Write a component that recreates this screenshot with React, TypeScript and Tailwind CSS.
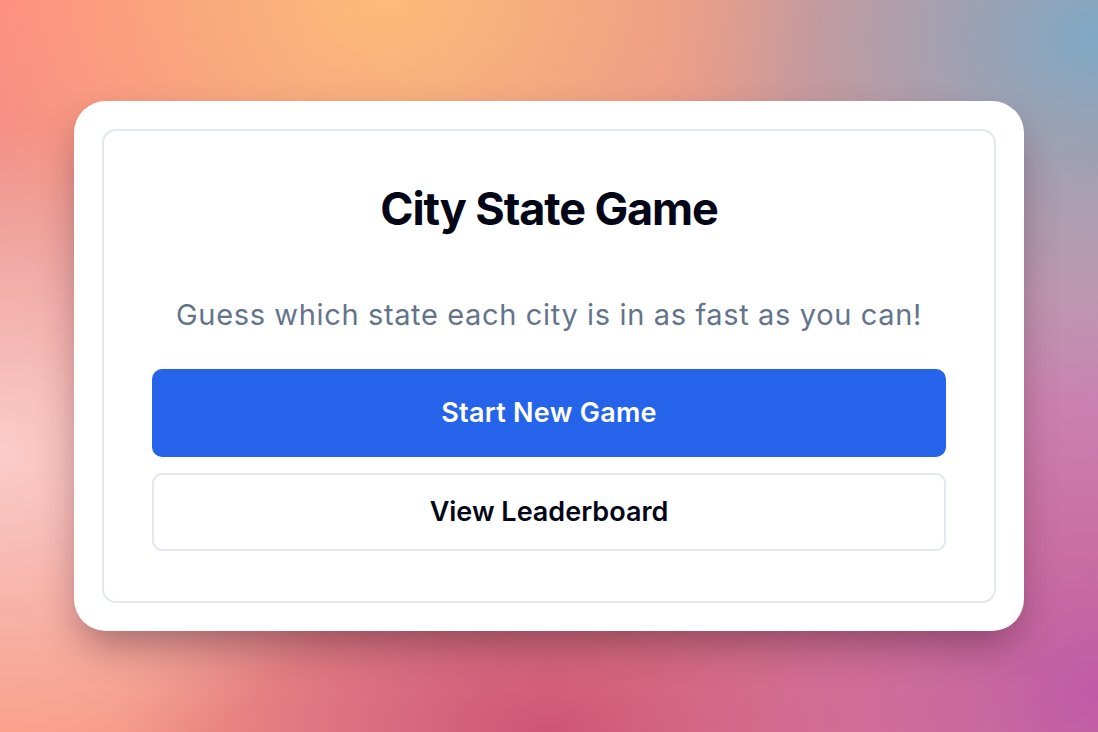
import React from "react";

export default function App() {
  return (
    <div
      className="w-full h-[732px] flex items-center justify-center overflow-hidden bg-[#e7928c] bg-[image:radial-gradient(ellipse_40%_45%_at_35%_0%,#ffbb78_0%,transparent_100%),radial-gradient(ellipse_40%_50%_at_100%_5%,#7fa8c4_0%,transparent_100%),radial-gradient(ellipse_35%_45%_at_0%_62%,#fcccc8_0%,transparent_100%),radial-gradient(ellipse_45%_55%_at_100%_95%,#c05aa6_0%,transparent_100%),radial-gradient(ellipse_40%_40%_at_100%_55%,#cc8fb8_0%,transparent_100%),radial-gradient(ellipse_40%_35%_at_50%_100%,#cf5478_0%,transparent_100%),radial-gradient(ellipse_40%_40%_at_0%_0%,#ff8a80_0%,transparent_100%),radial-gradient(ellipse_40%_40%_at_0%_100%,#fb9a80_0%,transparent_100%)]"
      style={{ fontFamily: "Inter, 'Noto Sans', sans-serif" }}
    >
      <div className="w-[950px] bg-white rounded-[32px] p-7 shadow-[0_20px_40px_-8px_rgba(60,20,40,0.45)]">
        <div className="border-2 border-[#e2e8f0] rounded-[14px] px-12 pt-[52px] pb-[50px] flex flex-col">
          <h1 className="text-center text-[45px] leading-[52px] font-bold tracking-[-0.025em] text-[#020617]">
            City State Game
          </h1>
          <p className="text-center text-[29px] leading-[36px] tracking-[0.022em] text-[#64748b] mt-[62px]">
            Guess which state each city is in as fast as you can!
          </p>
          <button className="mt-[36px] h-[88px] rounded-[10px] bg-[#2563eb] text-white text-[27px] font-semibold tracking-[0.01em]">
            Start New Game
          </button>
          <button className="mt-[16px] h-[78px] rounded-[10px] border-2 border-[#e2e8f0] bg-white text-[#020617] text-[27px] font-semibold">
            View Leaderboard
          </button>
        </div>
      </div>
    </div>
  );
}
